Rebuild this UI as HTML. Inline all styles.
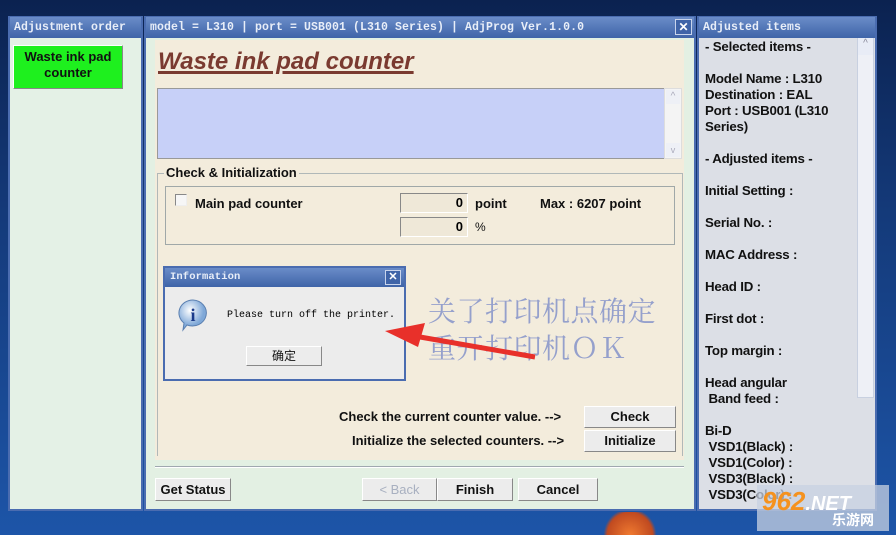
<!DOCTYPE html>
<html><head><meta charset="utf-8"><style>
*{margin:0;padding:0;box-sizing:border-box}
body{width:896px;height:535px;overflow:hidden;position:relative;background:linear-gradient(180deg,#0b2250 0%,#143a7a 40%,#1d55a8 100%);font-family:"Liberation Sans",Arial,sans-serif}
.a{position:absolute}
.tb{position:absolute;background:linear-gradient(#6a8cc8,#3f64a8);color:#e8eef8;font-family:"Liberation Mono",monospace;font-weight:bold;font-size:11.5px;letter-spacing:0.1px;line-height:22px;padding-left:4px;white-space:nowrap;overflow:hidden}
.pan{position:absolute;border:2px solid #4a6cb0;}
.btn{position:absolute;background:#ececec;border:1px solid;border-color:#fff #888 #888 #fff;font-weight:bold;font-size:13px;text-align:center;color:#111}
.b{font-weight:bold;font-size:13px;color:#111;position:absolute;white-space:nowrap}
.r{font-weight:bold;font-size:13.3px;letter-spacing:-0.2px;color:#111;position:absolute;left:705px;white-space:nowrap}
</style></head><body>
<div class="pan" style="left:8px;top:16px;width:135px;height:495px;background:#e4f1e6"></div>
<div class="tb" style="left:10px;top:17px;width:131px;height:21px">Adjustment order</div>
<div class="a" style="left:13px;top:45px;width:110px;height:44px;background:#1ef01e;border:1px solid;border-color:#fff #888 #888 #fff;font-weight:bold;font-size:13px;text-align:center;line-height:16px;padding-top:3px;color:#111">Waste ink pad<br>counter</div>
<div class="pan" style="left:144px;top:16px;width:552px;height:495px;background:#e3f0e3"></div>
<div class="tb" style="left:146px;top:17px;width:548px;height:21px">model = L310 | port = USB001 (L310 Series) | AdjProg Ver.1.0.0</div>
<div class="a" style="left:675px;top:19px;width:17px;height:16px;background:#3f64a8;border:1px solid #c8d4ec;color:#fff;font-size:12px;font-weight:bold;text-align:center;line-height:14px">✕</div>
<div class="a" style="left:155px;top:40px;width:529px;height:420px;background:#f3ecdc"></div>
<div class="a" style="left:158px;top:48px;font-size:24px;font-weight:bold;font-style:italic;color:#7a3a30;text-decoration:underline;text-decoration-thickness:3px;white-space:nowrap">Waste ink pad counter</div>
<div class="a" style="left:157px;top:88px;width:525px;height:71px;background:#c7d0f8;border:1px solid #999;border-right:none"></div>
<div class="a" style="left:664px;top:88px;width:18px;height:71px;background:#f4f4f4;border:1px solid #ddd"></div>
<div class="a" style="left:666px;top:90px;width:14px;height:14px;background:#eef0f6;color:#aab;font-size:10px;text-align:center;line-height:14px">^</div>
<div class="a" style="left:666px;top:143px;width:14px;height:14px;background:#eef0f6;color:#aab;font-size:9px;text-align:center;line-height:14px">v</div>
<div class="a" style="left:157px;top:173px;width:526px;height:283px;border:1px solid #b0b8b8;border-bottom:none"></div>
<div class="a" style="left:164px;top:165px;background:#f3ecdc;padding:0 2px;font-weight:bold;font-size:13px;color:#111">Check &amp; Initialization</div>
<div class="a" style="left:165px;top:186px;width:510px;height:59px;border:1px solid #a0a8a8"></div>
<div class="a" style="left:175px;top:194px;width:12px;height:12px;background:#f6f6f6;border:1px solid;border-color:#888 #eee #eee #888"></div>
<div class="b" style="left:195px;top:196px">Main pad counter</div>
<div class="a" style="left:400px;top:193px;width:68px;height:20px;background:#efe8d8;border:1px solid;border-color:#888 #fff #fff #888;text-align:right;padding-right:4px;font-weight:bold;font-size:13px;line-height:18px">0</div>
<div class="a" style="left:400px;top:217px;width:68px;height:20px;background:#efe8d8;border:1px solid;border-color:#888 #fff #fff #888;text-align:right;padding-right:4px;font-weight:bold;font-size:13px;line-height:18px">0</div>
<div class="b" style="left:475px;top:196px">point</div>
<div class="b" style="left:475px;top:220px;font-weight:normal;font-size:12px">%</div>
<div class="b" style="left:540px;top:196px">Max : 6207 point</div>
<div class="a" style="left:163px;top:266px;width:243px;height:115px;background:#ececec;border:2px solid #4a6cb0"></div>
<div class="tb" style="left:165px;top:268px;width:239px;height:19px;line-height:19px;font-size:10.5px;padding-left:5px">Information</div>
<div class="a" style="left:385px;top:270px;width:16px;height:15px;background:#3f64a8;border:1px solid #c8d4ec;color:#fff;font-size:11px;font-weight:bold;text-align:center;line-height:13px">✕</div>
<svg class="a" style="left:176px;top:298px" width="34" height="34" viewBox="0 0 34 34"><defs><radialGradient id="g" cx="40%" cy="35%"><stop offset="0" stop-color="#fff"/><stop offset="1" stop-color="#7fa8d8"/></radialGradient></defs><path d="M17 2a14 13 0 1 1-6 25l-4 5 1-7A14 13 0 0 1 17 2z" fill="url(#g)" stroke="#5a7fb0"/><text x="17" y="23" font-family="Liberation Serif,serif" font-weight="bold" font-size="18" fill="#1a3a8a" text-anchor="middle">i</text></svg>
<div class="a" style="left:227px;top:310px;font-family:'Liberation Mono',monospace;font-size:10px;color:#000;white-space:nowrap">Please turn off the printer.</div>
<div class="btn" style="left:246px;top:346px;width:76px;height:20px;font-weight:normal;font-size:12px;line-height:18px;font-family:'Liberation Sans','Noto Sans CJK SC',sans-serif">确定</div>
<div class="a" style="left:428px;top:292px;font-family:'Noto Serif CJK SC',serif;font-size:28px;color:#95a0cc;line-height:37px;letter-spacing:0.5px;white-space:nowrap">关了打印机点确定<br>重开打印机ＯＫ</div>
<svg class="a" style="left:380px;top:315px" width="160" height="50"><path d="M155 42 L40 22" stroke="#e8302a" stroke-width="5"/><path d="M5 16 L45 8 L38 32 Z" fill="#e8302a"/></svg>
<div class="b" style="left:339px;top:409px">Check the current counter value. --&gt;</div>
<div class="b" style="left:352px;top:433px">Initialize the selected counters. --&gt;</div>
<div class="btn" style="left:584px;top:406px;width:92px;height:22px;line-height:20px">Check</div>
<div class="btn" style="left:584px;top:430px;width:92px;height:22px;line-height:20px">Initialize</div>
<div class="a" style="left:155px;top:466px;width:529px;height:2px;border-top:1px solid #a0a8b0;border-bottom:1px solid #fff"></div>
<div class="btn" style="left:155px;top:478px;width:76px;height:23px;line-height:21px">Get Status</div>
<div class="btn" style="left:362px;top:478px;width:75px;height:23px;line-height:21px;color:#a8b0c0;font-weight:normal">&lt; Back</div>
<div class="btn" style="left:437px;top:478px;width:76px;height:23px;line-height:21px">Finish</div>
<div class="btn" style="left:518px;top:478px;width:80px;height:23px;line-height:21px">Cancel</div>
<div class="pan" style="left:697px;top:16px;width:180px;height:495px;background:#dcdfe6"></div>
<div class="tb" style="left:699px;top:17px;width:176px;height:21px">Adjusted items</div>
<div class="a" style="left:857px;top:38px;width:17px;height:360px;background:#eef0f6;border:1px solid #c8d0e0"></div>
<div class="a" style="left:858px;top:38px;width:15px;height:17px;background:#e8ecf6;color:#889;font-size:10px;text-align:center">^</div>
<div class="r" style="top:39px">- Selected items -</div>
<div class="r" style="top:71px;line-height:16px">Model Name : L310<br>Destination : EAL<br>Port : USB001 (L310<br>Series)</div>
<div class="r" style="top:151px">- Adjusted items -</div>
<div class="r" style="top:183px">Initial Setting :</div>
<div class="r" style="top:215px">Serial No. :</div>
<div class="r" style="top:247px">MAC Address :</div>
<div class="r" style="top:279px">Head ID :</div>
<div class="r" style="top:311px">First dot :</div>
<div class="r" style="top:343px">Top margin :</div>
<div class="r" style="top:375px;line-height:16px">Head angular<br>&nbsp;Band feed :</div>
<div class="r" style="top:423px;line-height:16px">Bi-D<br>&nbsp;VSD1(Black) :<br>&nbsp;VSD1(Color) :<br>&nbsp;VSD3(Black) :<br>&nbsp;VSD3(Color) :</div>
<div class="a" style="left:600px;top:512px;width:60px;height:23px;background:radial-gradient(circle at 50% 100%,#f07a30,#c04a20 60%,transparent 70%)"></div>
<div class="a" style="left:757px;top:485px;width:132px;height:46px;background:rgba(200,210,225,0.75)"></div>
<div class="a" style="left:762px;top:486px;font-size:26px;font-weight:bold;font-style:italic;color:#f5921e;white-space:nowrap">962<span style="color:#fff;font-size:20px">.NET</span></div>
<div class="a" style="left:832px;top:510px;font-size:14px;font-weight:bold;color:#fff;font-family:'Liberation Sans','Noto Sans CJK SC',sans-serif">乐游网</div>
</body></html>
